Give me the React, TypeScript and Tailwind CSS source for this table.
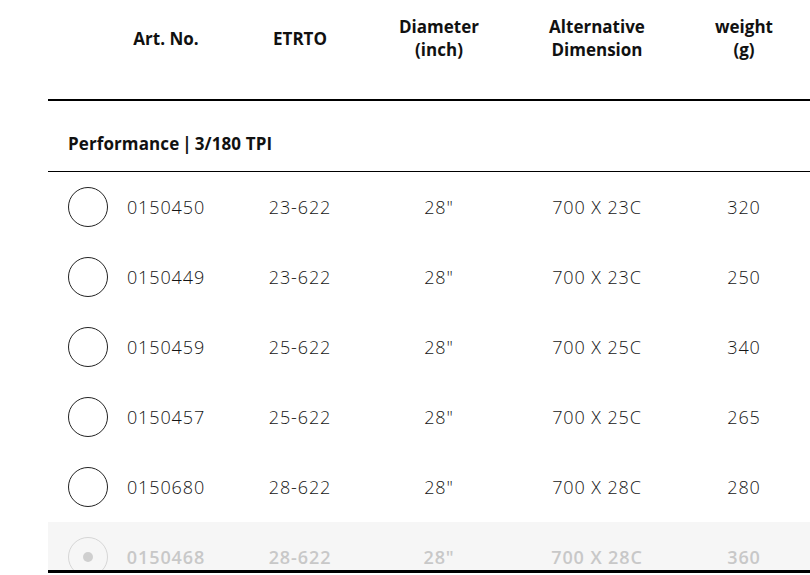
import React from "react";

const rows = [
  ["0150450", "23-622", "28\"", "700 X 23C", "320"],
  ["0150449", "23-622", "28\"", "700 X 23C", "250"],
  ["0150459", "25-622", "28\"", "700 X 25C", "340"],
  ["0150457", "25-622", "28\"", "700 X 25C", "265"],
  ["0150680", "28-622", "28\"", "700 X 28C", "280"],
];

const grid = "grid grid-cols-[70px_96px_172px_106px_210px_84px]";

export default function App() {
  return (
    <div
      className="w-[810px] h-[575px] overflow-hidden bg-white"
      style={{ fontFamily: '"Open Sans", "Noto Sans", sans-serif' }}
    >
      <div className="ml-[48px] h-[573px] flex flex-col overflow-hidden border-b-[3px] border-black">
        {/* header */}
        <div className="shrink-0 border-b-2 border-black pb-[23px]">
          <div className={`${grid} h-[76px] items-center text-center text-[17px] leading-[23px] font-bold text-[#111]`}>
            <div />
            <div>Art. No.</div>
            <div>ETRTO</div>
            <div>
              Diameter
              <br />
              (inch)
            </div>
            <div>
              Alternative
              <br />
              Dimension
            </div>
            <div>
              weight
              <br />
              (g)
            </div>
          </div>
        </div>
        {/* section title */}
        <div className="shrink-0 h-[71px] border-b border-black pl-[20px] pt-[31px] text-[17px] leading-[23px] font-bold text-[#111] tracking-[0.1px]">
          Performance<span className="mx-[3px]">|</span>3/180 TPI
        </div>
        {/* rows */}
        {rows.map((r) => (
          <div key={r[0]} className={`${grid} shrink-0 h-[70px] items-center text-center text-[18px] font-light tracking-[0.9px] text-[#151515]`}>
            <div className="pl-[20px]">
              <div className="w-[40px] h-[40px] rounded-full border border-[#222]" />
            </div>
            <div>{r[0]}</div>
            <div>{r[1]}</div>
            <div>{r[2]}</div>
            <div>{r[3]}</div>
            <div>{r[4]}</div>
          </div>
        ))}
        <div className={`${grid} shrink-0 h-[70px] items-center text-center text-[18px] font-semibold tracking-[0.9px] text-[#c8c8c8] bg-[#f6f6f6]`}>
          <div className="pl-[20px]">
            <div className="w-[40px] h-[40px] rounded-full border border-[#d6d6d6] flex items-center justify-center">
              <div className="w-[10px] h-[10px] rounded-full bg-[#cfcfcf]" />
            </div>
          </div>
          <div>0150468</div>
          <div>28-622</div>
          <div>28"</div>
          <div>700 X 28C</div>
          <div>360</div>
        </div>
      </div>
    </div>
  );
}
